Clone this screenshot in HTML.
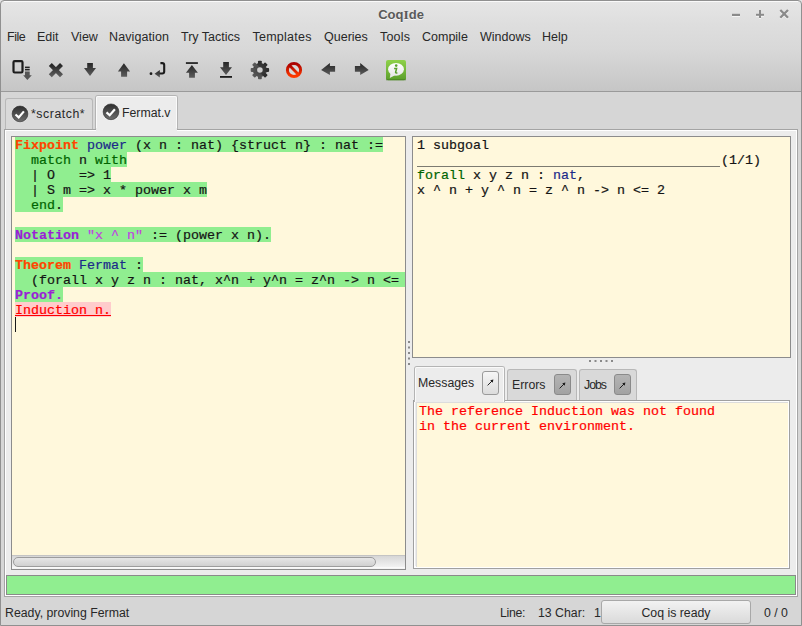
<!DOCTYPE html>
<html><head><meta charset="utf-8">
<style>
*{margin:0;padding:0;box-sizing:border-box}
html,body{width:802px;height:626px;overflow:hidden;background:#d6d6d6}
body{position:relative;font-family:"Liberation Sans",sans-serif;font-size:12.5px;color:#282828}
.a{position:absolute}
.t{position:absolute;white-space:pre;line-height:15px}
#top{left:0;top:0;width:802px;height:92px;background:linear-gradient(#e6e6e6 0px,#dedede 24px,#d8d8d8 50px,#c6c6c6 91px);border-bottom:1px solid #9a9a9a}
#win{left:0;top:0;width:802px;height:626px;border:1px solid #909090;border-radius:4px 4px 0 0;pointer-events:none}
.menu{top:30px;font-size:12.5px;color:#282828}
.mono{font-family:"Liberation Mono",monospace;font-size:13.33px;line-height:15px;white-space:pre;color:#141414;-webkit-text-stroke:0.2px}
.kw{color:#ff4500;font-weight:bold}
.vk{color:#9a1fd6;font-weight:bold}
.nm{color:#1b2a8a}
.gr{color:#006400}
.str{color:#c040e0}
.hl{background:#90ee90}
</style></head><body>
<div id="top" class="a"></div>
<div class="t" style="left:0;top:7px;width:802px;text-align:center;font-weight:bold;font-size:13px;color:#5a5a5a;text-shadow:0 1px 0 rgba(255,255,255,0.75)">Coq<span style="font-family:'Liberation Serif',serif;font-size:13.5px">I</span>de</div>
<!-- window controls -->
<svg class="a" style="left:725px;top:4px" width="70" height="20" viewBox="0 0 70 20">
 <g transform="translate(0,1)" opacity="0.8">
  <g fill="#fafafa"><rect x="7" y="9.8" width="8" height="2.2"/><rect x="31" y="9.8" width="8" height="2"/><rect x="34" y="6" width="2" height="8"/></g>
  <path d="M55.3 6 L63 13.8 M63 6 L55.3 13.8" stroke="#fafafa" stroke-width="2.3"/>
 </g>
 <g fill="#8a8a8a">
  <rect x="7" y="9.8" width="8" height="2.2"/>
  <rect x="31" y="9.8" width="8" height="2"/><rect x="34" y="6" width="2" height="8"/>
 </g>
 <path d="M55.3 6 L63 13.8 M63 6 L55.3 13.8" stroke="#8a8a8a" stroke-width="2.3"/>
</svg>
<!-- toolbar -->
<svg class="a" style="left:0;top:50px" width="420" height="40" viewBox="0 50 420 40">
<defs>
 <linearGradient id="ag" x1="0" y1="0" x2="0" y2="1"><stop offset="0" stop-color="#262626"/><stop offset="1" stop-color="#5c5c5c"/></linearGradient>
 <linearGradient id="rg" x1="0" y1="0" x2="0" y2="1"><stop offset="0" stop-color="#a80000"/><stop offset="1" stop-color="#ff3a00"/></linearGradient>
 <linearGradient id="gg" x1="0" y1="0" x2="0" y2="1"><stop offset="0" stop-color="#8fd24a"/><stop offset="1" stop-color="#5a9e2a"/></linearGradient>
 <linearGradient id="gear" gradientUnits="userSpaceOnUse" x1="0" y1="-9" x2="0" y2="9"><stop offset="0" stop-color="#2a2a2a"/><stop offset="1" stop-color="#5a5a5a"/></linearGradient>
</defs>
<!-- 1 -->
<rect x="13.5" y="61.1" width="9" height="11.4" rx="1.2" fill="none" stroke="#1c1c1c" stroke-width="2.2"/>
<rect x="25" y="66.6" width="4.7" height="1.5" fill="#222"/>
<rect x="25" y="68.9" width="4.7" height="1.5" fill="#222"/>
<path d="M25,71.4 H29.7 V75.2 H31.8 L27.35,80 L23.2,75.2 H25 Z" fill="#555"/>
<!-- 2 X -->
<path d="M50.3,64.6 L61.5,75.8 M61.5,64.6 L50.3,75.8" stroke="url(#ag)" stroke-width="4.2"/>
<!-- 3 down -->
<path d="M87.2,63 H92.9 V68 H96 L90,76 L84,68 H87.2 Z" fill="url(#ag)"/>
<!-- 4 up -->
<path d="M123.9,63.3 L130.1,71.6 H127.1 V76.8 H121.1 V71.6 H117.9 Z" fill="url(#ag)"/>
<!-- 5 hook -->
<circle cx="151" cy="73.7" r="1.4" fill="#1c1c1c"/>
<path d="M154.6,73.7 L159.8,70 V77.4 Z" fill="url(#ag)"/>
<path d="M160.4,63.1 H162.2 Q164.2,63.1 164.2,65.1 V71.5 Q164.2,73.5 162.2,73.5 H159.4" fill="none" stroke="#1c1c1c" stroke-width="2.1"/>
<!-- 6 top -->
<rect x="185.9" y="62.2" width="12" height="1.7" fill="#1c1c1c"/>
<path d="M191.9,65 L197.9,72.8 H194.9 V77.7 H189.1 V72.8 H185.9 Z" fill="url(#ag)"/>
<!-- 7 end -->
<path d="M223.2,62 H228.9 V67.2 H232 L226,75.1 L220,67.2 H223.2 Z" fill="url(#ag)"/>
<rect x="220" y="76" width="12" height="1.8" fill="#1c1c1c"/>
<!-- 8 gear -->
<g transform="translate(259.9,70)">
 <g fill="url(#gear)">
  <circle r="7"/>
  <rect x="-1.9" y="-9.2" width="3.8" height="18.4" rx="0.8"/>
  <rect x="-1.9" y="-9.2" width="3.8" height="18.4" rx="0.8" transform="rotate(45)"/>
  <rect x="-1.9" y="-9.2" width="3.8" height="18.4" rx="0.8" transform="rotate(90)"/>
  <rect x="-1.9" y="-9.2" width="3.8" height="18.4" rx="0.8" transform="rotate(135)"/>
 </g>
 <circle r="2.8" fill="#cfcfcf"/>
</g>
<!-- 9 stop -->
<circle cx="294" cy="70" r="6.6" fill="#d8d8d8" stroke="url(#rg)" stroke-width="3"/>
<path d="M289.6,65.6 L298.4,74.4" stroke="url(#rg)" stroke-width="2.8"/>
<!-- 10 back -->
<path d="M321.1,70 L329.9,63 V66 H335.1 V71.7 H329.9 V74.9 Z" fill="url(#ag)"/>
<!-- 11 fwd -->
<path d="M368.7,70 L360.2,63 V66 H354.9 V71.7 H360.2 V74.9 Z" fill="url(#ag)"/>
<!-- 12 info -->
<rect x="386" y="60" width="20" height="20.3" rx="2" fill="url(#gg)"/>
<rect x="386" y="79.3" width="20" height="1" fill="#3e6e1e" opacity="0.6"/>
<linearGradient id="bub" gradientUnits="userSpaceOnUse" x1="0" y1="63" x2="0" y2="78"><stop offset="0" stop-color="#ffffff"/><stop offset="1" stop-color="#e4e4e4"/></linearGradient>
<ellipse cx="396" cy="69.3" rx="7.9" ry="6.4" fill="url(#bub)"/>
<path d="M390.6,72.8 L389.8,77.9 L395,75.2 Z" fill="url(#bub)"/>
<circle cx="396.2" cy="65.6" r="1.3" fill="#5aa02c"/>
<path d="M394.1,68.6 H396.6 L395.6,72.2 Q395.5,73.1 396.4,73.1 H397.4" fill="none" stroke="#5aa02c" stroke-width="1.5"/>
</svg>
<!-- menu -->
<div class="t menu" style="left:7px;letter-spacing:-0.5px">File</div>
<div class="t menu" style="left:37px">Edit</div>
<div class="t menu" style="left:71px">View</div>
<div class="t menu" style="left:109px;letter-spacing:0.1px">Navigation</div>
<div class="t menu" style="left:181px">Try Tactics</div>
<div class="t menu" style="left:252.5px;letter-spacing:0.25px">Templates</div>
<div class="t menu" style="left:324px">Queries</div>
<div class="t menu" style="left:380px;letter-spacing:0.2px">Tools</div>
<div class="t menu" style="left:422px">Compile</div>
<div class="t menu" style="left:480px">Windows</div>
<div class="t menu" style="left:542px">Help</div>

<!-- notebook tabs -->
<div class="a" style="left:5px;top:98px;width:88px;height:32px;background:#d9d9d9;border:1px solid #b8b8b8;border-bottom:none;border-radius:3px 3px 0 0"></div>
<div class="a" style="left:95px;top:95px;width:83px;height:37px;background:#ececec;border:1px solid #b4b4b4;border-bottom:none;border-radius:3px 3px 0 0"></div>
<div class="a" style="left:96px;top:96px;width:81px;height:36px;border:1px solid #fafafa;border-bottom:none;border-radius:2px 2px 0 0"></div>
<div class="t" style="left:31px;top:107px;font-size:12.3px;letter-spacing:0.55px">*scratch*</div>
<div class="t" style="left:122px;top:106px;font-size:12.3px">Fermat.v</div>

<!-- notebook panel -->
<div class="a" style="left:4px;top:129px;width:794px;height:468px;background:#ececec;border:1px solid #a4a4a4"></div>
<div class="a" style="left:5px;top:130px;width:792px;height:466px;border:1px solid #fff"></div>
<div class="a" style="left:96px;top:128px;width:81px;height:3px;background:#ececec"></div>

<!-- tab icons -->
<svg class="a" style="left:0;top:95px" width="140" height="32" viewBox="0 95 140 32">
<defs><linearGradient id="cg" x1="0" y1="0" x2="0" y2="1"><stop offset="0" stop-color="#2e2e2e"/><stop offset="1" stop-color="#6e6e6e"/></linearGradient></defs>
<g transform="translate(20,113.9)">
 <circle r="8.6" fill="#ffffff" opacity="0.35"/>
 <circle r="7.9" fill="url(#cg)" stroke="#2a2a2a" stroke-width="0.6"/>
 <path d="M-4.5,0.6 L-1.3,3.5 L3.9,-2.5" fill="none" stroke="#fff" stroke-width="2.2"/>
</g>
<g transform="translate(111,111.8)">
 <circle r="8.6" fill="#ffffff" opacity="0.5"/>
 <circle r="7.9" fill="url(#cg)" stroke="#2a2a2a" stroke-width="0.6"/>
 <path d="M-4.5,0.6 L-1.3,3.5 L3.9,-2.5" fill="none" stroke="#fff" stroke-width="2.2"/>
</g>
</svg>
<!-- editor -->
<div class="a" style="left:11px;top:136px;width:395px;height:434px;border:1px solid #8c8c8c;background:linear-gradient(#d6d6d6 419px,#f4f4f4 431px)"></div>
<div class="a" style="left:12px;top:137px;width:393px;height:418px;background:#fff8dc;overflow:hidden">
<div class="a hl" style="left:3px;top:0;width:368px;height:15px"></div>
<div class="a hl" style="left:3px;top:15px;width:112px;height:15px"></div>
<div class="a hl" style="left:3px;top:30px;width:96px;height:15px"></div>
<div class="a hl" style="left:3px;top:45px;width:192px;height:15px"></div>
<div class="a hl" style="left:3px;top:60px;width:48px;height:15px"></div>
<div class="a hl" style="left:3px;top:90px;width:256px;height:15px"></div>
<div class="a hl" style="left:3px;top:120px;width:128px;height:15px"></div>
<div class="a hl" style="left:3px;top:135px;width:400px;height:15px"></div>
<div class="a hl" style="left:3px;top:150px;width:48px;height:15px"></div>
<div class="a" style="left:3px;top:165px;width:96px;height:15px;background:#ffcccc"></div>
<div class="a" style="left:3px;top:178px;width:96px;height:1px;background:#ff0000"></div>
<div class="mono" style="position:absolute;left:3px;top:1px"><span class="kw">Fixpoint</span> <span class="nm">power</span> (x n : nat) {struct n} : nat :=
  <span class="gr">match</span> n <span class="gr">with</span>
  | O   =&gt; 1
  | S m =&gt; x * power x m
  <span class="gr">end</span>.

<span class="vk">Notation</span> <span class="str">"x ^ n"</span> := (power x n).

<span class="kw">Theorem</span> <span class="nm">Fermat</span> :
  (forall x y z n : nat, x^n + y^n = z^n -&gt; n &lt;= 2).
<span class="vk">Proof.</span>
<span style="color:#f00">Induction n.</span>
</div>
<div class="a" style="left:3px;top:180px;width:1px;height:15px;background:#1a1a1a"></div>
</div>
<div class="a" style="left:12px;top:555px;width:393px;height:1px;background:#c4c4c4"></div>
<div class="a" style="left:12px;top:567px;width:393px;height:1px;background:#fafafa"></div>
<div class="a" style="left:13px;top:557px;width:363px;height:10px;border:1px solid #9c9c9c;border-radius:5px;background:linear-gradient(#e6e6e6,#d0d0d0)"></div>

<!-- goals -->
<div class="a" style="left:412px;top:136px;width:379px;height:222px;border:1px solid #8c8c8c;background:#fff8dc"></div>
<div class="mono" style="position:absolute;left:417px;top:138px">1 subgoal
                                      (1/1)
<span class="gr">forall</span> x y z n : <span class="nm">nat</span>,
x ^ n + y ^ n = z ^ n -&gt; n &lt;= 2</div>

<div class="a" style="left:417px;top:166px;width:303px;height:1px;background:#7c7a70"></div>
<!-- pane dots -->
<svg class="a" style="left:400px;top:335px" width="220" height="35" viewBox="400 335 220 35">
<g fill="#8a8a8a">
 <rect x="408" y="341" width="2" height="2"/><rect x="408" y="346.5" width="2" height="2"/><rect x="408" y="352" width="2" height="2"/><rect x="408" y="357.5" width="2" height="2"/><rect x="408" y="363" width="2" height="2"/>
 <rect x="589" y="360" width="2" height="2"/><rect x="594.5" y="360" width="2" height="2"/><rect x="600" y="360" width="2" height="2"/><rect x="605.5" y="360" width="2" height="2"/><rect x="611" y="360" width="2" height="2"/>
</g>
</svg>
<!-- messages -->
<div class="a" style="left:413px;top:400px;width:377px;height:169px;border:1px solid #a0a0a0;background:#ececec"></div>
<div class="a" style="left:414px;top:401px;width:375px;height:167px;border:1px solid #fff;border-bottom-width:2px"></div>
<div class="a" style="left:416px;top:402px;width:372px;height:165px;border:1px solid #dcdcdc;border-right:none;border-bottom:none;background:#fff8dc"></div>
<div class="mono" style="position:absolute;left:419px;top:404px;color:#f00">The reference Induction was not found
in the current environment.</div>
<!-- messages tabs -->
<div class="a" style="left:414px;top:366px;width:91px;height:36px;background:#ececec;border:1px solid #b4b4b4;border-bottom:none;border-radius:3px 3px 0 0"></div>
<div class="a" style="left:415px;top:367px;width:89px;height:35px;border:1px solid #fafafa;border-bottom:none;border-radius:2px 2px 0 0"></div>
<div class="a" style="left:507px;top:369px;width:70px;height:31px;background:#d9d9d9;border:1px solid #b8b8b8;border-bottom:none;border-radius:3px 3px 0 0"></div>
<div class="a" style="left:579px;top:369px;width:58px;height:31px;background:#d9d9d9;border:1px solid #b8b8b8;border-bottom:none;border-radius:3px 3px 0 0"></div>
<div class="t" style="left:418px;top:376px;font-size:12.3px">Messages</div>
<div class="t" style="left:512px;top:378px;font-size:12.3px">Errors</div>
<div class="t" style="left:584px;top:378px;font-size:12.3px;letter-spacing:-1px">Jobs</div>
<div class="a" style="left:482px;top:371px;width:17px;height:24px;border:1px solid #9a9a9a;border-radius:3px;background:linear-gradient(#f6f6f6,#dcdcdc)"></div>
<div class="a" style="left:554px;top:374px;width:17px;height:21px;border:1px solid #8a8a8a;border-radius:3px;background:linear-gradient(#b4b4b4,#a2a2a2)"></div>
<div class="a" style="left:614px;top:374px;width:17px;height:21px;border:1px solid #8a8a8a;border-radius:3px;background:linear-gradient(#b4b4b4,#a2a2a2)"></div>
<svg class="a" style="left:480px;top:370px" width="160" height="30" viewBox="480 370 160 30">
<path d="M487.6,385.4 L492.6,380.4 M559.6,388.4 L564.6,383.4 M619.6,388.4 L624.6,383.4" stroke="#1e1e1e" stroke-width="1"/>
<path d="M493.4,379.6 L490.2,380.3 L492.7,382.8 Z M565.4,382.6 L562.2,383.3 L564.7,385.8 Z M625.4,382.6 L622.2,383.3 L624.7,385.8 Z" fill="#1e1e1e"/>
</svg>

<!-- progress -->
<div class="a" style="left:6px;top:575px;width:790px;height:20px;border:1px solid #8a8a8a;background:#90ee90"></div>

<!-- status -->
<div class="t" style="left:5px;top:606px;font-size:12.3px">Ready, proving Fermat</div>
<div class="t" style="left:500px;top:606px;font-size:12.3px;letter-spacing:-0.3px">Line:</div>
<div class="t" style="left:538px;top:606px;font-size:12.3px">13 Char:</div>
<div class="t" style="left:594px;top:606px;font-size:12.3px">1</div>
<div class="a" style="left:601px;top:600px;width:150px;height:24px;border:1px solid #a8a8a8;border-radius:3px;background:linear-gradient(#f2f2f2,#dadada)"></div>
<div class="t" style="left:601px;top:606px;width:150px;text-align:center;font-size:12.3px">Coq is ready</div>
<div class="t" style="left:764px;top:606px;font-size:12.3px">0 / 0</div>

<div class="a" style="left:4px;top:1px;width:794px;height:1px;background:#fafafa"></div>
<div id="win" class="a"></div>
</body></html>
